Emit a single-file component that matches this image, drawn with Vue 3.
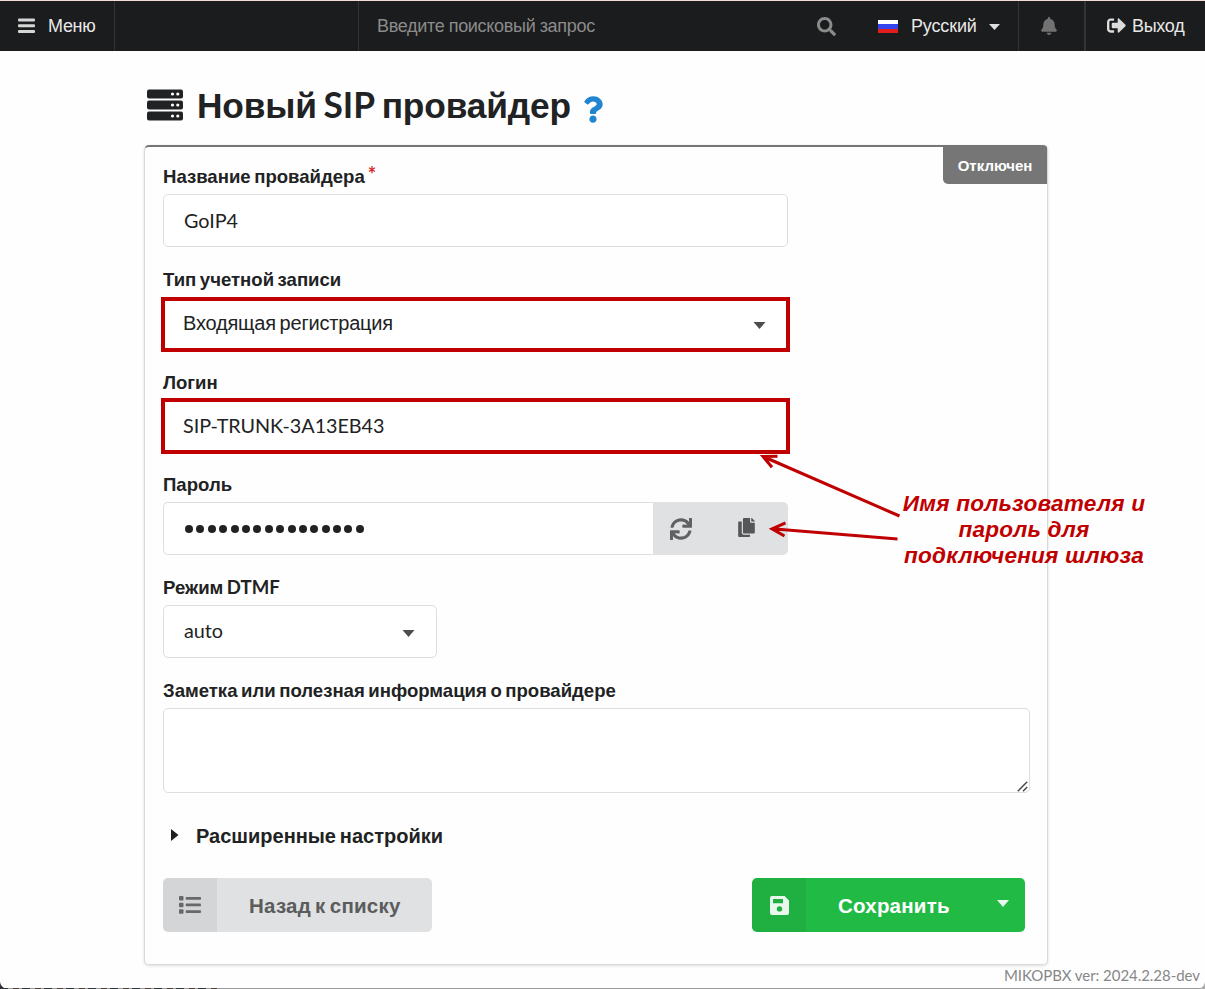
<script setup>
const dots = 16
</script>

<template>
  <div class="page">
    <nav class="topbar">
      <div class="item menu">
        <svg width="18" height="16" viewBox="0 0 18 16"><g fill="#d6d6d6"><rect width="17" height="3" rx="1" y="0.5" /><rect width="17" height="3" rx="1" y="6.2" /><rect width="17" height="3" rx="1" y="12" /></g></svg>
        <span class="t-menu">Меню</span>
      </div>
      <div class="gap"></div>
      <div class="search">
        <span class="t-search">Введите поисковый запрос</span>
        <svg width="19" height="19" viewBox="0 0 512 512"><path fill="#8b8b8b" d="M505 442.700L405.300 343c-4.500-4.500-10.600-7-17-7H372c27.600-35.300 44-79.700 44-128C416 93.100 322.900 0 208 0S0 93.100 0 208s93.100 208 208 208c48.300 0 92.700-16.400 128-44v16.300c0 6.400 2.500 12.500 7 17l99.700 99.700c9.400 9.400 24.600 9.400 33.900 0l28.300-28.300c9.400-9.400 9.400-24.600.1-34zM208 336c-70.700 0-128-57.200-128-128 0-70.700 57.200-128 128-128 70.700 0 128 57.200 128 128 0 70.700-57.200 128-128 128z" /></svg>
      </div>
      <div class="lang">
        <span class="flag"></span>
        <span class="t-lang">Русский</span>
        <svg class="caret" width="11" height="6" viewBox="0 0 11 6"><path fill="#dedede" d="M0 0h11L5.500 6z" /></svg>
      </div>
      <div class="bell">
        <svg width="16" height="18" viewBox="0 0 448 512"><path fill="#727272" d="M224 512c35.320 0 63.970-28.650 63.970-64H160.030c0 35.350 28.650 64 63.970 64zm215.390-149.710c-19.320-20.760-55.470-51.990-55.470-154.290 0-77.700-54.480-139.900-127.940-155.160V32c0-17.670-14.320-32-31.980-32s-31.980 14.330-31.980 32v20.840C118.560 68.100 64.080 130.300 64.080 208c0 102.300-36.150 133.530-55.470 154.290-6 6.450-8.660 14.160-8.610 21.710.11 16.400 12.980 32 32.100 32h383.800c19.120 0 32-15.600 32.100-32 .05-7.550-2.610-15.270-8.610-21.710z" /></svg>
      </div>
      <div class="exit">
        <svg width="19" height="19" viewBox="0 0 512 512"><path fill="#dcdcdc" d="M497 273L329 441c-15 15-41 4.500-41-17v-96H152c-13.300 0-24-10.700-24-24v-96c0-13.300 10.700-24 24-24h136V88c0-21.400 25.900-32 41-17l168 168c9.300 9.400 9.300 24.600 0 34zM192 436v-40c0-6.600-5.400-12-12-12H96c-17.700 0-32-14.300-32-32V160c0-17.700 14.300-32 32-32h84c6.600 0 12-5.400 12-12V76c0-6.600-5.400-12-12-12H96c-53 0-96 43-96 96v192c0 53 43 96 96 96h84c6.600 0 12-5.400 12-12z" /></svg>
        <span class="t-exit">Выход</span>
      </div>
    </nav>

    <header class="title">
      <svg class="server" width="36" height="32" viewBox="0 0 36 32">
        <g fill="#212223"><rect width="36" height="9" rx="2" y="0.500" /><rect width="36" height="9" rx="2" y="11.500" /><rect width="36" height="9" rx="2" y="22.500" /></g>
        <g fill="#fff"><circle cx="25.500" cy="5" r="1.600" /><circle cx="30.800" cy="5" r="1.600" /><circle cx="25.500" cy="16" r="1.600" /><circle cx="30.800" cy="16" r="1.600" /><circle cx="25.500" cy="27" r="1.600" /><circle cx="30.800" cy="27" r="1.600" /></g>
      </svg>
      <h1>Новый <span class="lat">SIP</span> провайдер</h1>
      <svg class="help" width="20" height="27" viewBox="0 0 384 512"><path fill="#2185d0" d="M202.021 0C122.202 0 70.503 32.703 29.914 91.026c-7.363 10.580-5.093 25.086 5.178 32.874l43.138 32.709c10.373 7.865 25.132 6.026 33.253-4.148 25.049-31.381 43.630-49.449 82.757-49.449 30.764 0 68.816 19.799 68.816 49.631 0 22.552-18.617 34.134-48.993 51.164-35.423 19.860-82.299 44.576-82.299 106.405V320c0 13.255 10.745 24 24 24h72.471c13.255 0 24-10.745 24-24v-5.773c0-42.860 125.268-44.645 125.268-160.627C377.504 66.256 286.902 0 202.021 0zM192 373.459c-38.196 0-69.271 31.075-69.271 69.271 0 38.195 31.075 69.270 69.271 69.270s69.271-31.075 69.271-69.271-31.075-69.270-69.271-69.270z" /></svg>
    </header>

    <main class="card">
      <div class="status"><span>Отключен</span></div>

      <div class="field">
        <label>Название провайдера<sup>*</sup></label>
        <div class="input"><span class="lat">GoIP4</span></div>
      </div>
      <div class="field">
        <label>Тип учетной записи</label>
        <div class="input marked select"><span class="v-type">Входящая регистрация</span>
          <svg width="13" height="7" viewBox="0 0 13 7"><path fill="#4d4d4d" d="M0.500 0h12L6.500 7z" /></svg>
        </div>
      </div>
      <div class="field">
        <label>Логин</label>
        <div class="input marked login"><span class="lat">SIP-TRUNK-3A13EB43</span></div>
      </div>
      <div class="field">
        <label>Пароль</label>
        <div class="action">
          <div class="input password"><i v-for="n in dots" :key="n"></i></div>
          <div class="tools">
            <svg width="22" height="22" viewBox="0 0 512 512"><path fill="#606162" d="M440.650 12.570l4 82.770A247.160 247.160 0 0 0 255.830 8C134.730 8 33.910 94.920 12.290 209.820A12 12 0 0 0 24.090 224h49.050a12 12 0 0 0 11.670-9.260 175.910 175.910 0 0 1 317-56.940l-101.460-4.860a12 12 0 0 0-12.570 12v47.410a12 12 0 0 0 12 12H500a12 12 0 0 0 12-12V12a12 12 0 0 0-12-12h-47.370a12 12 0 0 0-11.980 12.570zM255.830 432a175.610 175.610 0 0 1-146-77.800l101.800 4.870a12 12 0 0 0 12.570-12v-47.400a12 12 0 0 0-12-12H12a12 12 0 0 0-12 12V500a12 12 0 0 0 12 12h47.350a12 12 0 0 0 12-12.600l-4.150-82.570A247.170 247.170 0 0 0 255.830 504c121.110 0 221.930-86.920 243.550-201.820a12 12 0 0 0-11.800-14.180h-49.050a12 12 0 0 0-11.670 9.260A175.860 175.860 0 0 1 255.830 432z" /></svg>
            <svg class="copy" width="17" height="19" viewBox="0 0 448 512"><path fill="#555657" d="M320 448v40c0 13.255-10.745 24-24 24H24c-13.255 0-24-10.745-24-24V120c0-13.255 10.745-24 24-24h72v296c0 30.879 25.121 56 56 56h168zm0-344V0H152c-13.255 0-24 10.745-24 24v368c0 13.255 10.745 24 24 24h272c13.255 0 24-10.745 24-24V128H344c-13.200 0-24-10.800-24-24zm120.971-31.029L375.029 7.029A24 24 0 0 0 358.059 0H352v96h96v-6.059a24 24 0 0 0-7.029-16.970z" /></svg>
          </div>
        </div>
      </div>
      <div class="field">
        <label>Режим <span class="lat">DTMF</span></label>
        <div class="input select small"><span class="lat">auto</span>
          <svg width="13" height="7" viewBox="0 0 13 7"><path fill="#4d4d4d" d="M0.500 0h12L6.500 7z" /></svg>
        </div>
      </div>
      <div class="field">
        <label>Заметка или полезная информация о провайдере</label>
        <div class="area"><svg width="11" height="11" viewBox="0 0 11 11"><path d="M.8 10.200L10.200.8M6 10.200L10.200 6" fill="none" stroke="#4a4a4a" stroke-width="1.500" /></svg></div>
      </div>

      <div class="accordion">
        <svg width="8" height="12" viewBox="0 0 8 12"><path fill="#1f1f20" d="M0 0l7.500 6L0 12z" /></svg>
        <span class="t-adv">Расширенные настройки</span>
      </div>

      <div class="buttons">
        <div class="btn back">
          <div class="ico"><svg width="22" height="18" viewBox="0 0 22 18"><g fill="#676869"><rect x="0" y="0" width="4.500" height="4.500" rx="1" /><rect x="0" y="6.700" width="4.500" height="4.500" rx="1" /><rect x="0" y="13.300" width="4.500" height="4.500" rx="1" /><rect x="6.700" y="1" width="15.300" height="2.700" rx=".8" /><rect x="6.700" y="7.600" width="15.300" height="2.700" rx=".8" /><rect x="6.700" y="14.300" width="15.300" height="2.700" rx=".8" /></g></svg></div>
          <div class="cap"><span class="t-back">Назад к списку</span></div>
        </div>
        <div class="btn save">
          <div class="ico"><svg width="19" height="19" viewBox="0 0 19 19"><path fill="#e9f7ec" fill-rule="evenodd" d="M2 0h12.600L19 4.400V17a2 2 0 0 1-2 2H2a2 2 0 0 1-2-2V2a2 2 0 0 1 2-2zM3 3v4.300h10V3zM9.500 10.200a2.700 2.700 0 1 0 0 5.400 2.700 2.700 0 0 0 0-5.400z" /></svg></div>
          <div class="cap"><span class="t-save">Сохранить</span></div>
          <svg class="drop" width="12" height="7" viewBox="0 0 12 7"><path fill="#e9f8ed" d="M0 0h12L6 7z" /></svg>
        </div>
      </div>
    </main>

    <footer><span class="lat">MIKOPBX ver: 2024.2.28-dev</span></footer>
    <div class="edge"><div class="remnant"></div></div>
    <div class="corner left"></div>
    <div class="corner right"></div>

    <svg class="arrows" width="1205" height="989" viewBox="0 0 1205 989">
      <g fill="none" stroke="#c00000" stroke-width="3">
        <path d="M899.500 516L763 456.500M777.500 456.200L763 456.500L772 467.300" />
        <path d="M897.500 539L772 528.800M785.500 522.800L772 528.800L784.500 536" />
      </g>
    </svg>
    <div class="note">
      <span class="n1">Имя пользователя и</span>
      <span class="n2">пароль для</span>
      <span class="n3">подключения шлюза</span>
    </div>
  </div>
</template>

<style>
html, body { margin: 0; overflow: hidden; background: #fff; }
</style>

<style scoped>
* { box-sizing: border-box; }
.page { position: relative; width: 1205px; height: 989px; overflow: hidden; background: #fefefe; font-family: "Liberation Sans", Arial, sans-serif; color: #212223; white-space: nowrap; }
svg { display: block; flex: none; }
.lat { font-family: Lato, "Liberation Sans", sans-serif; letter-spacing: 0; word-spacing: 0; line-height: 1; }
.topbar { height: 51px; border-top: 1px solid #f0dcd2; background: #1b1c1d; display: flex; color: #e8e8e8; font-size: 18px; }
.topbar > div { display: flex; align-items: center; }
.menu { width: 115px; border-right: 1px solid #323334; padding-left: 18px; gap: 12px; }
.t-menu, .t-exit { letter-spacing: -.3px; }
.t-lang { letter-spacing: -.15px; }
.t-search { letter-spacing: -.31px; word-spacing: -.400px; }
.gap { width: 244px; border-right: 1px solid #323334; }
.search { width: 499px; padding: 0 22px 0 18px; justify-content: space-between; color: #8b8b8b; }
.lang { width: 161px; border-right: 1px solid #323334; padding-left: 20px; }
.flag { width: 20px; height: 13px; margin-right: 13px; background: linear-gradient(#fff 0 31%, #3644ed 31% 67%, #e31c1c 67%); }
.caret { margin: 2px 0 0 12px; }
.bell { width: 67px; border-right: 2px solid #323334; justify-content: center; padding-right: 5px; }
.bell svg { margin-top: -1px; }
.exit { flex: 1; padding-left: 21px; gap: 6px; }
.exit svg { margin-top: -1px; }
.title { height: 94px; padding: 0 0 0 147px; display: flex; align-items: flex-start; }
.server { margin-top: 38px; }
h1 { margin: 30px 0 0 14px; width: 373px; font-size: 35.300px; line-height: 50px; font-weight: 700; letter-spacing: -.17px; word-spacing: -3px; }
.help { margin: 45px 0 0 13px; }
.card { position: relative; margin-left: 144px; width: 904px; height: 820px; border: 1px solid #d9d9da; border-top: 2px solid #767676; border-radius: 5px; box-shadow: 0 1px 3px rgba(34, 36, 38, .15); padding: 16px 17px 0 18px; background: #fefefe; }
.status { position: absolute; right: 0; top: 0; width: 104px; height: 37px; background: #767676; border-radius: 0 0 0 5px; color: #fff; font-weight: 700; font-size: 15px; display: flex; align-items: center; justify-content: center; }
.field { height: 102.800px; }
label { display: block; height: 31px; line-height: 27px; font-size: 18.570px; font-weight: 700; word-spacing: -1.600px; }
label sup { color: #db2828; font-size: 20px; line-height: 0; margin-left: 3px; vertical-align: 1px; font-family: Lato, sans-serif; font-weight: 700; }
.input { width: 625px; height: 53px; border: 1px solid #dededf; border-radius: 5px; padding: 0 20px 2px; font-size: 20px; display: flex; align-items: center; justify-content: space-between; word-spacing: -1.700px; background: #fff; }
.input .lat { font-size: 19.800px; letter-spacing: -.05px; line-height: 24px; }
.input.marked { width: 629px; height: 55px; margin: 0 0 0 -2px; border: 4px solid #c00000; border-radius: 0; padding: 0 20px 3px 18px; }
.v-type { letter-spacing: -.2px; padding-top: 2px; }
.input.login { height: 56px; margin-top: -2px; padding-bottom: 2px; }
.input.select { padding-bottom: 3px; }
.select svg { margin-top: 6px; margin-right: 0; }
.input.small { width: 274px; }
.input.small svg { margin-right: 1px; }
.action { display: flex; }
.input.password { width: 490px; border-radius: 5px 0 0 5px; border-right: 0; justify-content: flex-start; gap: 3.400px; padding-left: 21px; padding-top: 1px; padding-bottom: 0; }
.password i { width: 8px; height: 8px; border-radius: 50%; background: #212223; }
.tools { width: 135px; height: 53px; background: #e0e1e2; border-radius: 0 5px 5px 0; display: flex; align-items: center; padding-left: 17px; }
.copy { margin-left: 46px; margin-top: -2px; }
.area { width: 867px; height: 85px; border: 1px solid #dededf; border-radius: 5px; display: flex; align-items: flex-end; justify-content: flex-end; padding: 0 1px 0 0; background: #fff; }
.accordion { display: flex; align-items: center; margin-top: 42px; height: 30px; padding-left: 8px; font-size: 20px; font-weight: 700; word-spacing: -1.700px; }
.accordion svg { margin-right: 17px; margin-top: -3px; }
.buttons { display: flex; justify-content: space-between; margin-top: 26px; padding-right: 5px; }
.btn { display: flex; height: 54px; border-radius: 5px; overflow: hidden; font-size: 20.500px; font-weight: 700; align-items: center; word-spacing: -1.700px; letter-spacing: .22px; }
.ico { width: 54px; height: 54px; background: rgba(0, 0, 0, .05); display: flex; align-items: center; justify-content: center; }
.save .ico { padding-top: 1px; }
.cap { padding-top: 2px; }
.back { width: 269px; background: #e0e1e2; color: #5b5c5d; }
.save { width: 273px; background: #21ba45; color: #fff; }
.back .cap { padding-left: 32px; }
.save .cap { width: 176px; padding-left: 32px; }
.drop { margin: -3px 0 0 15px; }
footer { position: absolute; right: 5px; top: 966px; font-size: 15px; line-height: 20px; color: #868788; }
footer .lat { letter-spacing: -.04px; }
.edge { position: absolute; left: 0; right: 0; bottom: 0; height: 1px; background: #999; }
.remnant { width: 220px; height: 1px; background: repeating-linear-gradient(90deg, #30373b 0 8px, #999 8px 13px, #4d4139 13px 19px, #999 19px 22px); }
.corner { position: absolute; bottom: 0; width: 8px; height: 8px; }
.corner.left { left: 0; background: radial-gradient(circle at 8px 0, transparent 7.500px, #303236 8.500px); }
.corner.right { right: 0; background: radial-gradient(circle at 0 0, transparent 7.500px, #aaa 8.500px); }
.arrows { position: absolute; left: 0; top: 0; }
.note { position: absolute; left: 900px; top: 491px; width: 248px; display: flex; flex-direction: column; align-items: center; color: #c00000; font-size: 22.600px; font-style: italic; font-weight: 700; line-height: 26px; letter-spacing: .21px; }
</style>
